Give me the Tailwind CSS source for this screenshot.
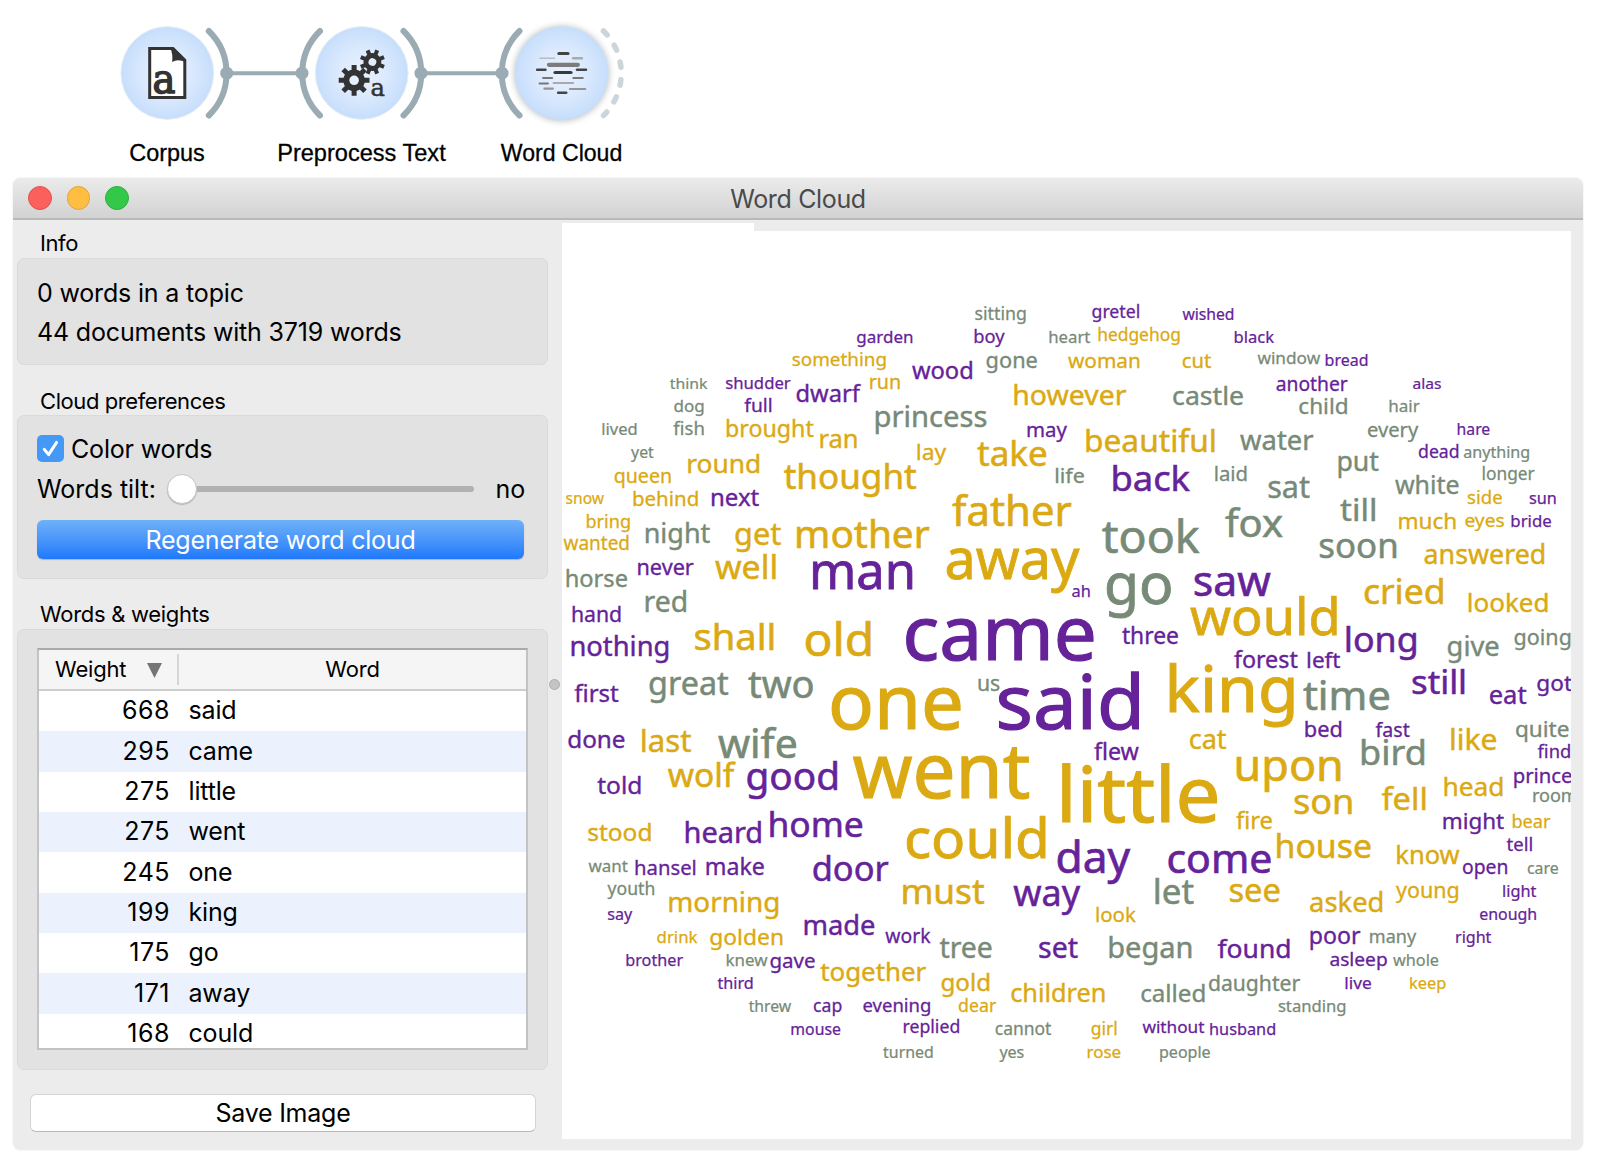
<!DOCTYPE html>
<html lang="en">
<head>
<meta charset="utf-8">
<title>Word Cloud</title>
<script src="https://cdn.jsdelivr.net/npm/@tailwindcss/browser@4"></script>
</head>
<body class="bg-white w-[1600px] h-[1162px] overflow-hidden font-['Inter',sans-serif] text-black">

<!-- Workflow: Corpus -> Preprocess Text -> Word Cloud -->
<svg class="block w-[1600px] h-[178px]" viewBox="0 0 1600 178" fill="none">
  <defs>
    <radialGradient id="node"><stop offset="0" stop-color="#e8f1fd"/><stop offset=".5" stop-color="#dceafd"/><stop offset="1" stop-color="#c6defc"/></radialGradient>
    <filter id="soft" x="-20%" y="-20%" width="140%" height="140%"><feGaussianBlur stdDeviation="3"/></filter>
  </defs>
  <g stroke="#9aabb3" stroke-width="6" stroke-linecap="round">
    <path d="M208.8 31A59.2 59.2 0 0 1 208.8 115.5"/>
    <path d="M320 31A59.2 59.2 0 0 0 320 115.5"/>
    <path d="M403.5 31A59.2 59.2 0 0 1 403.5 115.5"/>
    <path d="M519.5 31A59.2 59.2 0 0 0 519.5 115.5"/>
    <path d="M603.5 31A59.2 59.2 0 0 1 603.5 115.5" stroke="#ccd5d9" stroke-width="5.5" stroke-dasharray="5.5 12.3"/>
  </g>
  <path d="M226.7 73.2H302M421 73.2H502" stroke="#9aabb3" stroke-width="4"/>
  <g fill="#9aabb3"><circle cx="226.7" cy="73.2" r="6.5"/><circle cx="302" cy="73.2" r="6.5"/><circle cx="421" cy="73.2" r="6.5"/><circle cx="502" cy="73.2" r="6.5"/></g>

  <circle cx="167.3" cy="73" r="46.4" fill="url(#node)" stroke="#e9eef3" stroke-width="1"/>
  <circle cx="361.7" cy="73" r="46.4" fill="url(#node)" stroke="#e9eef3" stroke-width="1"/>
  <circle cx="561.7" cy="73.5" r="47.5" fill="#7f8a94" opacity=".5" filter="url(#soft)"/>
  <circle cx="561.7" cy="73" r="46.4" fill="url(#node)"/>

  <!-- document with letter -->
  <path d="M149.7 48.6H173L184.8 60.2V97.6H149.7Z" fill="#fff" stroke="#333" stroke-width="3"/>
  <path d="M170.5 48.5H174L186 60V62.5Q178 58.5 172.2 62Q173 54 170.5 48.5Z" fill="#333"/>
  <text x="152.5" y="93.4" font-family="DejaVu Serif,serif" font-size="41" textLength="23" lengthAdjust="spacingAndGlyphs" fill="#333" stroke="#333" stroke-width="1.5">a</text>

  <!-- gears with letter -->
  <g stroke="#333" stroke-width="5">
    <path d="M354.1 64.9V95.7M338.7 80.3H369.5M343.2 69.4L365 91.2M343.2 91.2L365 69.4"/>
    <circle cx="354.1" cy="80.3" r="7.8" stroke-width="6" fill="#e6f0fd"/>
  </g>
  <g stroke="#333" stroke-width="4" transform="rotate(22.5 372.4 62)">
    <path d="M372.4 49.4V74.6M359.8 62H385M363.5 53.1L381.3 70.9M363.5 70.9L381.3 53.1"/>
    <circle cx="372.4" cy="62" r="6.4" stroke-width="5" fill="#e2edfc"/>
  </g>
  <text x="370.5" y="95.8" font-family="DejaVu Serif,serif" font-size="25" textLength="14.5" lengthAdjust="spacingAndGlyphs" fill="#333" stroke="#333" stroke-width=".5">a</text>

  <!-- cloud lines -->
  <g stroke-linecap="round">
    <path d="M558.8 53.4H568" stroke="#444" stroke-width="3"/>
    <path d="M540 58.3H554.6" stroke="#bbb" stroke-width="1.4"/>
    <path d="M573.2 58.3H581.8" stroke="#aaa" stroke-width="2.5"/>
    <path d="M549 64.8H577.8" stroke="#7c7c7c" stroke-width="4.3"/>
    <path d="M537.2 69.7H545.4M577 69.7H586" stroke="#444" stroke-width="2.6"/>
    <path d="M555 72.5H571" stroke="#3a3a3a" stroke-width="3.2"/>
    <path d="M543 78H552.2M573.3 78H582.8M539.5 83.5H548" stroke="#777" stroke-width="1.9"/>
    <path d="M553.6 83H573.2" stroke="#aaa" stroke-width="2"/>
    <path d="M544.4 88.7H552.8M570 89H585.2" stroke="#949494" stroke-width="2.2"/>
    <path d="M558.2 92.7H566.2" stroke="#444" stroke-width="2.6"/>
  </g>

  <g font-family="Liberation Sans,Arial,sans-serif" font-size="24" fill="#000" stroke="#000" stroke-width=".3">
    <text x="129.3" y="161.4" textLength="75.5" lengthAdjust="spacingAndGlyphs">Corpus</text>
    <text x="277.2" y="161.4" textLength="168.5" lengthAdjust="spacingAndGlyphs">Preprocess Text</text>
    <text x="500.8" y="161.4" textLength="121.5" lengthAdjust="spacingAndGlyphs">Word Cloud</text>
  </g>
</svg>

<main class="ml-[13px] w-[1570px] h-[972px] rounded-lg bg-[#ececec] flex flex-col overflow-hidden shadow-[0_0_2px_rgba(0,0,0,0.12)]">
  <header class="h-[42px] shrink-0 border-b-2 border-[#b9b9b9] bg-linear-to-b from-[#ebebeb] to-[#d2d2d2] grid grid-cols-[1fr_auto_1fr] items-center">
    <div class="flex gap-[15px] pl-[15px]">
      <span class="size-[23.5px] rounded-full bg-[#fc605c] border border-[#e2504c]"></span>
      <span class="size-[23.5px] rounded-full bg-[#fdbe41] border border-[#e0a437]"></span>
      <span class="size-[23.5px] rounded-full bg-[#34c84a] border border-[#2bb03e]"></span>
    </div>
    <h1 class="text-[25px] leading-none text-[#4a4a4a] pt-[2px] tracking-[-0.35px]">Word Cloud</h1>
  </header>

  <div class="flex flex-1 min-h-0">
    <aside class="w-[535px] shrink-0 pl-[4px] flex flex-col tracking-[-0.17px]">
      <h2 class="h-[38px] pl-[23px] pt-[10px] text-[22px] leading-[26px] tracking-[-0.4px]">Info</h2>
      <section class="h-[107px] rounded-[7px] bg-[#e2e2e2] border border-[#dadada] pl-[19px] pt-[15px] text-[25px] leading-[39px]">
        <p>0 words in a topic</p>
        <p>44 documents with 3719 words</p>
      </section>

      <h2 class="h-[50px] pl-[23px] pt-[23px] text-[22px] leading-[26px] tracking-[-0.42px]">Cloud preferences</h2>
      <section class="h-[164px] rounded-[7px] bg-[#e2e2e2] border border-[#dadada] px-[19px] pt-[19px] text-[25px]">
        <label class="flex items-center h-[27px] gap-[7px] leading-none">
          <span class="size-[27px] rounded-[5px] bg-[#4499f7] flex items-center justify-center">
            <svg class="size-[27px]" viewBox="0 0 27 27" fill="none" stroke="#fff" stroke-width="3" stroke-linecap="round" stroke-linejoin="round"><path d="M7.2 14.3L11.6 19.6L19.6 7.4"/></svg>
          </span>
          <span class="pt-[2px]">Color words</span>
        </label>
        <div class="flex items-center h-[30px] mt-[12px] leading-none">
          <span class="w-[129.5px] pt-px tracking-[0px]">Words tilt:</span>
          <span class="size-[30px] shrink-0 rounded-full bg-white border border-[#c6c6c6] shadow-[0_1px_1px_rgba(0,0,0,0.2)]"></span>
          <span class="h-[6px] w-[277px] rounded-r-full bg-[#b1b1b1]"></span>
          <span class="ml-auto pr-[3px] pt-px">no</span>
        </div>
        <button class="mt-[16px] w-[487px] h-[39px] rounded-[6px] bg-linear-to-b from-[#6fb1f8] to-[#1f78fb] text-white text-[25px] leading-none pt-px tracking-[-0.2px] shadow-[0_1px_1px_rgba(0,0,0,0.2)]">Regenerate word cloud</button>
      </section>

      <h2 class="h-[50px] pl-[23px] pt-[22px] text-[22px] leading-[26px] tracking-[-0.3px]">Words &amp; weights</h2>
      <section class="h-[441px] rounded-[7px] bg-[#e2e2e2] border border-[#dadada] px-[19px] pt-[18px]">
        <div class="w-[491px] h-[402px] border-2 border-[#c3c3c3] border-t-[#a9a9a9] bg-white overflow-hidden">
          <div class="h-[41px] bg-[#f5f5f5] border-b-2 border-[#cdcdcd] flex items-center text-[22px] leading-none">
            <div class="w-[140px] h-[31px] border-r-2 border-[#d6d6d6] pl-[16px] pb-[2px] flex items-center gap-[21px]">Weight
              <svg class="w-[15px] h-[15px] mt-[4px]" viewBox="0 0 15 15"><path d="M0 0H15L7.5 15Z" fill="#757575"/></svg>
            </div>
            <div class="flex-1 text-center pb-[2px]">Word</div>
          </div>
          <div id="rows" class="text-[25px]"></div>
        </div>
      </section>

      <button class="mt-[24px] ml-[13px] w-[506px] h-[38px] rounded-[6px] bg-white border border-[#d4d4d4] border-b-[#b8b8b8] text-[25px] leading-none tracking-[-0.25px]">Save Image</button>
    </aside>

    <div class="w-[14px] shrink-0 pt-[459px] pl-px"><div class="size-[11px] rounded-full bg-[#c4c4c4] border border-[#aeaeae]"></div></div>

    <div class="w-[1009px] h-[916px] mt-[3px] flex flex-col">
      <div class="w-[192px] h-[8px] bg-white"></div>
      <svg id="cloud" class="block w-[1009px] h-[908px] bg-white overflow-hidden font-['Noto_Sans',sans-serif]" viewBox="562 231 1009 908"></svg>
    </div>
  </div>
</main>

<script>
const weights = [[668,'said'],[295,'came'],[275,'little'],[275,'went'],[245,'one'],[199,'king'],[175,'go'],[171,'away'],[168,'could']];
document.getElementById('rows').innerHTML = weights.map(([n, w]) =>
  `<div class="flex h-[40.35px] items-center even:bg-[#ebf2fe]"><span class="w-[131px] text-right tracking-[0.5px]">${n}</span><span class="pl-[18.5px]">${w}</span></div>`).join('');

// word, left, right, baseline
const words = {
  'fill-[#652299] stroke-[#652299]': `garden 856.5 912 342.7|shudder 725.3 790.3 388.7|dwarf 796 859.3 401.7|full 744 771 411.7|next 711.3 758.7 506|never 637.7 693.3 575|man 812.7 911.7 588.7|hand 572 620.3 621.3|nothing 571 668 656|first 574 618.3 701.7|done 567.7 624.3 748|good 746.7 836.7 790|told 597 640.3 794|heard 685.3 760.7 842.3|home 769.7 862 836.3|hansel 635 695 874.7|make 706 763.7 874.7|door 812.7 888 880.3|say 607.3 631.7 919.7|made 804 874 934.7|work 885 930 942.7|brother 626 682.7 966|gave 769.7 814.3 967.7|third 717 752.3 989|cap 813.3 840.7 1012|evening 862.7 929.7 1012|mouse 791 840 1035|replied 903.3 958.7 1033|day 1057 1129.3 873|come 1167.7 1270.3 873|way 1013.3 1079.3 906|set 1038.7 1077.3 957.7|found 1217.3 1289.3 957.7|without 1142 1204 1033|husband 1209.7 1274.7 1035|might 1443 1503.7 828.3|tell 1506.3 1531.7 850.7|open 1462.3 1506.7 873.7|light 1502.7 1536 897|enough 1479.3 1535.7 919.7|poor 1310 1360 944|right 1455.7 1491 943|asleep 1329.7 1386 966|live 1345 1370.7 989|gretel 1091.7 1138.7 317.7|wished 1182 1233 319.7|boy 974 1004 342.7|black 1234.3 1273.7 342.7|wood 911.7 971.7 378.7|may 1027 1066.3 436.7|back 1112.7 1189.3 490.7|bread 1325.3 1367 365.7|another 1276 1347.3 390.3|alas 1412.7 1440.7 388.7|hare 1457.3 1489.3 434.7|dead 1418.3 1458 457.7|sun 1529 1555.3 503.7|bride 1511 1550.7 527|ah 1071.7 1089.3 596.7|saw 1194.3 1270 596|came 905.7 1093.3 659.7|three 1121.7 1177.7 644|forest 1233.7 1297.3 667.3|left 1307.3 1340 667.3|said 998.7 1138.7 729|flew 1093.7 1138.3 759.7|long 1346 1415.7 651.7|still 1412 1464.3 694|eat 1489.3 1526 703.7|got 1536.7 1571.5 690.3|bed 1305 1341 736.7|fast 1375.3 1409.3 736.7|find 1537.3 1569.7 757.7|prince 1513.7 1571.5 782.7`,
  'fill-[#dba912] stroke-[#dba912]': `something 792 885.3 366|run 869.7 899.3 388.3|brought 726.3 813.3 436.7|ran 820 856.3 447.7|round 687.7 758.7 472.7|queen 614 670.3 482.7|thought 783.7 916 488.7|snow 565.7 603.7 503.7|behind 633 697.3 506|bring 586.3 629.3 527.3|get 735 780.7 544.7|mother 796.7 929 547.7|wanted 563.3 628.3 550|well 715 775.3 578.7|shall 694.7 773.3 650|old 805 870.3 655.7|one 831 960.3 729|last 641.7 690.7 752|wolf 667.7 733.7 787|went 853.3 1029 798|stood 587.7 650.3 840.7|morning 669 778 911.7|drink 656.7 697 943|golden 709.7 782 944.3|together 820 925.7 980.7|could 906 1045.3 858|must 902.7 984 904|see 1229.3 1279.3 902|look 1096 1135.3 921.3|gold 941 989 990.7|children 1010.7 1104.3 1002|dear 958.3 995.7 1012|girl 1091 1116.3 1035|rose 1087.3 1120.3 1058|fire 1235.7 1271.7 828.7|house 1276.7 1370.3 857.7|bear 1512.3 1550 827.7|know 1396.7 1459 863.3|young 1395.7 1457.7 898|asked 1309.7 1382 911.3|keep 1409.7 1444.7 989|hedgehog 1098 1179.3 341|woman 1067.7 1139 367.7|cut 1182 1210.7 367.7|however 1014 1125.7 404.3|lay 917 945.7 459.7|take 977 1046 465.3|beautiful 1086 1214.3 452|father 952.3 1071 525.3|away 946.7 1078.3 579|side 1467.3 1501.7 503.7|much 1398.7 1455.3 528.7|eyes 1464.7 1503.7 527|answered 1424.3 1544 563.7|would 1190.3 1336.3 634.3|king 1169.3 1293.3 712|cat 1189.3 1226 748.3|little 1062 1217 821.3|upon 1236.7 1340 780.7|cried 1364 1442.7 603.7|looked 1468.3 1547.3 611.7|like 1450.7 1496 750|head 1444 1502.3 795.7|fell 1381.3 1425 809.7|son 1294 1351.3 813.7`,
  'fill-[#778a77] stroke-[#778a77]': `think 669.3 707 388.7|dog 673.7 703.3 411.7|princess 875.3 986 427|lived 602 636.3 435|fish 673 703.3 434.7|yet 630.7 653.3 458|night 645.3 709.7 542.7|horse 566 626.7 586.7|red 645.3 685.7 611.7|great 649 728 694.3|two 748 812.7 697.7|wife 718 795.7 758|want 588 627.3 871.7|youth 607.3 653.7 895|knew 726.3 767 966|threw 748.3 790.7 1012|turned 882.7 932.3 1058|let 1155 1193.3 904|tree 939.3 991.3 957.7|began 1109 1191 957.7|called 1140.7 1204.3 1002|daughter 1208.3 1299.7 990.7|cannot 995 1051 1035|yes 999 1023.3 1058|people 1159.7 1209.7 1058|care 1527 1557.7 873.7|many 1369.7 1415.7 943|whole 1392.7 1438 966|standing 1278 1345 1012|sitting 974.7 1025.3 319.7|heart 1049 1090 342.7|gone 986 1036.7 367.7|castle 1172.7 1242.7 404.3|life 1055.3 1083.7 482.7|laid 1214.7 1246.3 481|took 1102 1198.7 552.3|fox 1225 1282.3 536.7|window 1257 1319.7 363.7|child 1298.7 1346.7 413.7|hair 1389 1419.3 411.7|every 1367.3 1417.7 436.7|water 1240 1313 449.7|anything 1463.3 1528.7 458|put 1338 1378.3 470.7|white 1394.7 1458.3 494|longer 1482.3 1534.3 479.3|sat 1268 1309.3 498|till 1340 1374.7 520.7|soon 1319.3 1395.7 557.3|go 1106 1170.7 603.7|us 978 999 690.3|give 1447.3 1498.3 655.7|going 1514 1570 644.7|time 1303 1388.7 709.7|bird 1361.3 1423.7 765|quite 1515.3 1568.3 736.7|room 1532.7 1576 801.3`
};
// advance widths per letter (em) and side bearings, used to size each word to its slot
const adv = {a:.555,b:.623,c:.52,d:.623,e:.559,f:.353,g:.617,h:.615,i:.287,k:.58,l:.287,m:.926,n:.617,o:.615,p:.623,q:.623,r:.388,s:.496,t:.357,u:.615,v:.51,w:.764,x:.548,y:.51};
const tight = 'vwyxtf', round = 'aceodgqs';
const lsb = c => tight.includes(c) ? .02 : round.includes(c) ? .05 : .085;
const rsb = c => 'vwyxtfrk'.includes(c) ? .015 : 'ceosa'.includes(c) ? .045 : .08;
let out = '';
for (const [cls, list] of Object.entries(words)) {
  for (const item of list.split('|')) {
    const [w, l, r, y] = item.split(' ');
    const em = [...w].reduce((s, c) => s + adv[c], 0);
    const a = lsb(w[0]), b = rsb(w[w.length - 1]);
    const size = (r - l) / (em - a - b);
    out += `<text class="${cls}" x="${(l - a * size + .7).toFixed(1)}" y="${(+y + .3).toFixed(1)}" font-size="${(size * .985).toFixed(1)}" stroke-width="${(size * .015).toFixed(2)}" textLength="${(em * size - .5).toFixed(1)}" lengthAdjust="spacingAndGlyphs">${w}</text>`;
  }
}
document.getElementById('cloud').innerHTML = out;
</script>
</body>
</html>
